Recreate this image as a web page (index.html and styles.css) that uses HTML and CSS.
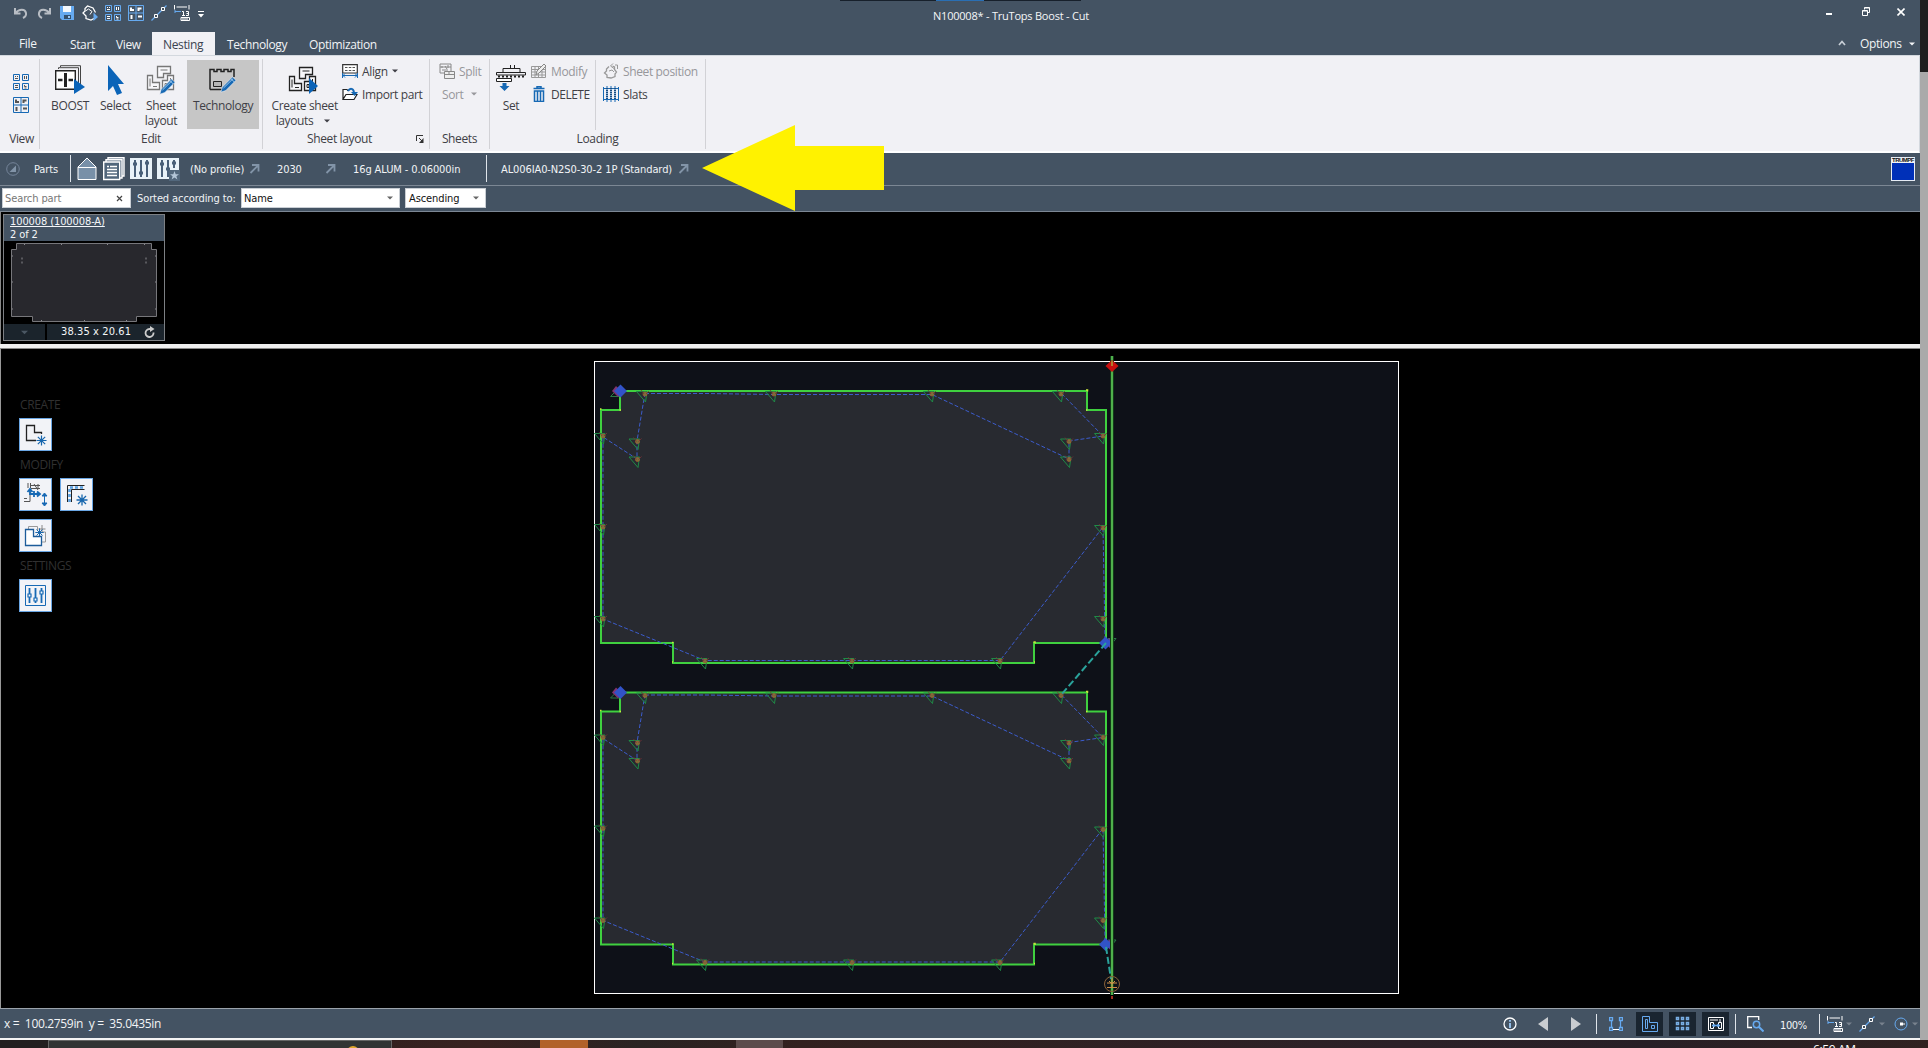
FILE: index.html
```html
<!DOCTYPE html>
<html lang="en">
<head>
<meta charset="utf-8">
<title>N100008* - TruTops Boost - Cut</title>
<link rel="stylesheet" href="styles.css">
</head>
<body>
<svg class="defs" width="0" height="0">
  <defs>
    <symbol id="grid" viewBox="0 0 16 16"><path d="M.5.5h6v6h-6zM9.500.5h6v6h-6zM.5 9.500h6v6h-6zM9.500 9.500h6v6h-6z" fill="none" stroke="currentColor"/><path d="M2 2.500h1M4 2.500h1M2 4.500h3M11.500 2v3M13.500 2v3M2 11.500h3M2 13.500h3M11.500 11v1.500h2M11.500 14h2" stroke="var(--ink)" fill="none"/></symbol>
    <symbol id="panes" viewBox="0 0 16 16"><path d="M.5.5h15v15H.5zM8 .5v15M.5 8h15" fill="none" stroke="currentColor"/><path d="M3 2.500v2.500h3M10.500 6V3.500h3M3.500 10v4M10 11.500h4" stroke="var(--ink)" fill="none" stroke-width="2"/></symbol>
    <symbol id="ruler" viewBox="0 0 16 16"><path d="M.5 0v4.500M15 0v4.500M2.500 2h10.500" stroke="var(--ink)"/><path d="M1 6.500h6M1 5v3" stroke="currentColor"/><path d="M8 6.500h1.500v4M8 10.500h3M12 6.500h2.500v2H12.500M14.500 8v2.500H12M7 12.500h8.500v3H7zM9 13v2M11 13v2M13 13v2" fill="none" stroke="var(--ink)"/></symbol>
    <symbol id="line" viewBox="0 0 16 16"><path d="M.5 15.500L15.500.5" stroke="currentColor" stroke-width="1.200"/><path d="M10.500 2.500h3v3h-3zM3.500 9.500h3v3h-3z" fill="#445363" stroke="#fff"/></symbol>
    <symbol id="down" viewBox="0 0 6 4"><path d="M0 .5h6L3 3.500z" fill="currentColor"/></symbol>
    <symbol id="link" viewBox="0 0 11 11"><path d="M1.500 10L9 2.500M3 2h6.500v6.500" fill="none" stroke="#8294a8" stroke-width="1.800"/></symbol>
    <symbol id="pencil" viewBox="0 0 17 17"><path d="M.8 16.200l1.500-5L12.500 1l3.500 3.300L5.800 14.600z" fill="#1769b4" stroke="#f1f1f5" stroke-width=".6"/><path d="M3.500 12L13 2.700M11 2.700l3.300 3.300" stroke="#9cc8ec" fill="none"/></symbol>
    <symbol id="blocks" viewBox="0 0 30 30"><path d="M11.500 1.500h13v7h-7v4h-6zM1.500 10.500h5v7h7v7h-12zM16.500 15.500h5v-5h6v14h-11z" fill="#f7f7fa" stroke="currentColor" stroke-width="1.300"/><path d="M14.500 5h7M4 13.500v8M7 21.500h4M19 18.500h2v3h-2zM24.500 13v8" fill="none" stroke="currentColor"/></symbol>
    <symbol id="star" viewBox="0 0 12 12"><path d="M6 .5v11M.5 6h11M2 2l8 8M10 2l-8 8" stroke="#1766ad" stroke-width="1.300"/></symbol>
    <g id="mark"><path d="M-8.500-2.500H2L.5 8z" fill="none" stroke="#1f8a46"/><circle cx="0" cy="0" r="2" fill="#7b713b" stroke="#a25d31" stroke-width=".8"/><path d="M-4-4L-1 0M4-3L1 0" stroke="#783135" stroke-width=".8"/></g>
    <g id="lead"><path d="M0-6.500l6.500 6.500-6.500 6.500-6.500-6.500z" fill="#3253c8"/></g>
    <g id="part">
      <path class="sheet-part" d="M620 391H1087V410H1106V643H1034V663H673V643H601V410H620Z"/>
      <path d="M1033.500 642h1.500v1.500M672 642.500h1.500M600 409h1.500M619.500 410h1.500M1086 390h1.500v1.500M1086 410h1.500M1034 662h1M672 662h1" stroke="#c6e63c" stroke-width="1.500" fill="none"/>
      <path class="travel" d="M645 393.500H706L774 394.500H932L1069 459V441L1103 436L1061 393M645 393L637 441V459L603 437V619L705 660.500H1000L1103 527L1105 640"/>
      <use href="#mark" x="645" y="394"/><use href="#mark" x="774" y="394"/><use href="#mark" x="932" y="394"/><use href="#mark" x="1061" y="394"/>
      <use href="#mark" x="603" y="436"/><use href="#mark" x="603" y="527"/><use href="#mark" x="603" y="619"/>
      <use href="#mark" x="637.500" y="441.500"/><use href="#mark" x="637.500" y="459.500"/><use href="#mark" x="1069" y="441.500"/><use href="#mark" x="1069" y="459.500"/>
      <use href="#mark" x="1103" y="436"/><use href="#mark" x="1103" y="528"/><use href="#mark" x="1103" y="619"/>
      <use href="#mark" x="705" y="661"/><use href="#mark" x="852" y="661"/><use href="#mark" x="1000" y="661"/>
      <path d="M610.500 396.500h9M610.500 396.500l6-6M1108 638.500h8l-4 5" fill="none" stroke="#2a7a45"/>
      <path d="M616 386l6 6-4 5-6-6z" fill="#81336f"/><path d="M1109 638l5 5-4 5-4-4z" fill="#6a3c96"/>
      <use href="#lead" x="620.500" y="391"/><use href="#lead" x="1105.500" y="643"/>
    </g>
  </defs>
</svg>

<div class="screen">
<div class="app">
  <header class="titlebar">
    <div class="quick">
      <svg width="14" height="12" viewBox="0 0 14 12"><path d="M1 1v5.500h5.500M1.500 6C5 2 11 1.500 12 6c.4 2-1 4-3 5" fill="none" stroke="#b8bdc4" stroke-width="2"/></svg>
      <svg width="14" height="12" viewBox="0 0 14 12"><path d="M13 1v5.500H7.500M12.500 6C9 2 3 1.500 2 6c-.4 2 1 4 3 5" fill="none" stroke="#b8bdc4" stroke-width="2"/></svg>
      <svg width="14" height="14" viewBox="0 0 14 14"><path d="M0 0h14v14H2l-2-2z" fill="#66aaf0"/><path d="M3 0h8v6H3z" fill="#f4f8fc"/><path d="M4 9h7v4H4z" fill="#34516e"/><path d="M8 10h2v2H8z" fill="#9cc8f4"/></svg>
      <svg width="16" height="16" viewBox="0 0 16 16"><path d="M12 13.500L9 15 4 13.500V11L1 8l2-2V3.500L5.500 1 11 3l2.500 4.500" fill="none" stroke="#fff" stroke-width="1.300"/><path d="M3.500 6l3-2 3.500 2.500-2 3" fill="none" stroke="#fff"/><path d="M11.500 7.500L16 12l-4.500 4z" fill="#66aaf0"/></svg>
      <svg class="onbar" width="16" height="16"><use href="#grid"/></svg>
      <svg class="onbar" width="16" height="16"><use href="#panes"/></svg>
      <svg class="onbar" width="16" height="16"><use href="#line"/></svg>
      <svg class="onbar" width="16" height="16"><use href="#ruler"/></svg>
      <svg width="6" height="7" viewBox="0 0 6 7"><path d="M0 .5h6" stroke="#fff"/><path d="M0 3h6L3 6.500z" fill="#fff"/></svg>
    </div>
    <div class="caption"><div class="notch"><i></i></div><h1>N100008* - TruTops Boost - Cut</h1></div>
    <div class="winbtns">
      <svg width="6" height="10" viewBox="0 0 6 10"><path d="M0 9h6" stroke="#fff" stroke-width="2"/></svg>
      <svg width="8" height="9" viewBox="0 0 8 9"><path d="M2.500 2.500v-2h5v5h-2M.5 3.500h5v5h-5zM.5 4h5M2.500 1h5" fill="none" stroke="#fff"/></svg>
      <svg width="8" height="8" viewBox="0 0 8 8"><path d="M.5.5l7 7M7.500.5l-7 7" stroke="#fff" stroke-width="1.600"/></svg>
    </div>
  </header>

  <nav class="tabs">
    <a class="tab t-file">File</a><a class="tab t-start">Start</a><a class="tab t-view">View</a><a class="tab active">Nesting</a><a class="tab t-tech">Technology</a><a class="tab t-opt">Optimization</a>
    <span class="spacer"></span>
    <svg class="collapse" width="8" height="6" viewBox="0 0 8 6"><path d="M1 5l3-3.500L7 5" fill="none" stroke="#c7ced6" stroke-width="1.700"/></svg>
    <span class="options">Options</span>
    <svg class="opt-arrow" width="6" height="4"><use href="#down"/></svg>
  </nav>

  <section class="ribbon">
    <div class="group g-view">
      <div class="body stack">
        <svg width="16" height="16"><use href="#grid"/></svg>
        <svg width="16" height="16"><use href="#panes"/></svg>
      </div>
      <div class="name">View</div>
    </div>
    <div class="group g-edit">
      <div class="body">
        <button class="big b-boost"><svg width="30" height="30" viewBox="0 0 30 30"><path d="M5.500 2V.7h20V20M3.500 4V2.700h20V21" fill="none" stroke="#444"/><path d="M.7 5.700h19.600v18.600H.7z" fill="#fff" stroke="#222" stroke-width="1.400"/><path d="M10.500 8v14" stroke="#222" stroke-width="3"/><path d="M3 15h4.500M13.500 15H18" stroke="#222" stroke-width="2.400"/><path d="M19 14l11 8-11 7z" fill="#0b64b8"/></svg><span>BOOST</span></button>
        <button class="big b-select"><svg width="30" height="30" viewBox="0 0 30 30"><path d="M7 0v26l5-5 4 9 5-2-4-9h6z" fill="#0b64b8"/></svg><span>Select</span></button>
        <button class="big b-layout"><svg width="30" height="30" viewBox="0 0 30 30"><use href="#blocks" width="30" height="30"/><use href="#pencil" x="13" y="13" width="17" height="17"/></svg><span>Sheet<br>layout</span></button>
        <button class="big b-tech"><svg width="30" height="30" viewBox="0 0 30 30"><path d="M2 24.500V4.500h4v2h3v-2h4v2h3v-2h4v2h3v-2h3V12M2 24.500h12" fill="none" stroke="#222" stroke-width="1.500"/><path d="M5.500 16.500h8v5h-8z" fill="#b5b5b5" stroke="#222"/><use href="#pencil" x="12" y="11" width="17" height="17"/></svg><span>Technology</span></button>
      </div>
      <div class="name">Edit</div>
    </div>
    <div class="group g-sheet">
      <div class="body">
        <button class="big b-create"><svg width="30" height="30" viewBox="0 0 30 30"><use href="#blocks" y="1" width="30" height="30"/><path d="M21 13l9 8-9 8z" fill="#0b64b8"/></svg><span>Create sheet<br>layouts<svg class="inl" width="6" height="4"><use href="#down"/></svg></span></button>
        <div class="smalls">
          <button class="small w-align"><svg width="16" height="16" viewBox="0 0 16 16"><path d="M.7 10V1.700h14.600V10z" fill="#fff" stroke="#333" stroke-width="1.200"/><path d="M3 4.500h2.500M6.800 4.500h2.500M10.500 4.500H13M3 7.500h2.500M6.800 7.500h2.500M10.500 7.500H13" stroke="#555"/><path d="M1 12.500h14M3 10.500l-2 2 2 2M13 10.500l2 2-2 2M.5 10v5M15.500 10v5" fill="none" stroke="#1769b4"/></svg><span>Align</span><svg width="6" height="4"><use href="#down"/></svg></button>
          <button class="small w-import"><svg width="16" height="16" viewBox="0 0 16 16"><path d="M1 13.500V3.500h4l1 1.500M1 13.500l3-5h11l-3 5zM13 8V6" fill="#fff" stroke="#222" stroke-width="1.200"/><path d="M6 5c2-3 5-3 6 1" fill="none" stroke="#1769b4" stroke-width="2"/><path d="M9 6h7l-3.500 4z" fill="#1769b4"/></svg><span>Import part</span></button>
        </div>
      </div>
      <div class="name">Sheet layout</div>
      <svg class="launcher" width="8" height="8" viewBox="0 0 8 8"><path d="M.5 6V.5H7M3 3l3 3" fill="none" stroke="#333"/><path d="M7.500 3v5H3z" fill="#333"/></svg>
    </div>
    <div class="group g-sheets">
      <div class="body">
        <div class="smalls off">
          <button class="small w-split"><svg width="16" height="16" viewBox="0 0 16 16"><path d="M1 1h11v9H1zM3 3v2M6 3l2 3M3 7h6M9 2v3M1 4h11" fill="none" stroke="#888"/><path d="M5.500 8.500h10v7h-10zM5.500 11.500h10M10 8.500v3" fill="#eee" stroke="#888"/></svg><span>Split</span></button>
          <button class="small w-sort"><span>Sort</span><svg width="6" height="4"><use href="#down"/></svg></button>
        </div>
      </div>
      <div class="name">Sheets</div>
    </div>
    <div class="group g-load">
      <div class="body">
        <button class="big b-set"><svg width="30" height="30" viewBox="0 0 30 30"><path d="M14.500 0v4M18.500 0v4M7 3.500h17v4H7zM.5 7.500h29v2.500H.5z" fill="none" stroke="#222"/><path d="M2 11.500h28" stroke="#222" stroke-width="2" stroke-dasharray="2 2"/><path d="M.5 13.500h15v3H.5z" fill="#fff" stroke="#222"/><path d="M6.500 18h4v3h3l-5 5-5-5h3z" fill="#1769b4"/></svg><span>Set</span></button>
        <div class="smalls s-load">
          <button class="small off"><svg width="16" height="16" viewBox="0 0 16 16"><path d="M.5 3.500h14v11H.5zM.5 6.500h14M.5 9h14M.5 12h14M4 4v10M7.500 4v10M11 4v10" fill="none" stroke="#999"/><path d="M5 12l1-4 7-7 2 2-7 7z" fill="#eee" stroke="#888"/></svg><span>Modify</span></button>
          <button class="small"><svg width="16" height="16" viewBox="0 0 16 16"><path d="M2.500 2.500h11M6 2V.7h4V2M3.500 5h9v10.500h-9zM6.500 5v10M9.500 5v10" fill="none" stroke="#1769b4" stroke-width="1.500"/></svg><span class="del">DELETE</span></button>
        </div>
        <div class="smalls s-pos">
          <button class="small off"><svg width="16" height="16" viewBox="0 0 16 16"><path d="M6 3.500L3.500 6v2L1.500 10l2.500 2v2.500l4 .5 4-1.500V11l1.500-2-2-2.500V4l-2-1" fill="none" stroke="#999" stroke-width="1.300"/><path d="M10 .5L7.500 3 11 5.500M12 2h2.500v4M6 8l3-1 2 2" fill="none" stroke="#999"/></svg><span>Sheet position</span></button>
          <button class="small"><svg width="16" height="16" viewBox="0 0 16 16"><path d="M.5 2.500h15M.5 13.500h15M.5 1v14M15.500 1v14M4 0v16M8 0v16M12 0v16" stroke="#1769b4" fill="none"/><path d="M4 2v12M8 2v12M12 2v12" stroke="#1c4d80" stroke-width="2" stroke-dasharray="1 1"/></svg><span>Slats</span></button>
        </div>
      </div>
      <div class="name">Loading</div>
    </div>
  </section>

  <section class="jobbar">
    <svg class="j-tri" width="14" height="14" viewBox="0 0 14 14"><circle cx="7" cy="7" r="6.300" fill="none" stroke="#75859a"/><path d="M10 3.500V10H3.500z" fill="#8294a8"/></svg>
    <span class="j-parts">Parts</span>
    <i class="bar"></i>
    <svg class="j-home" width="20" height="24" viewBox="0 0 20 24"><path d="M1 10L10 1l9 9v12.500H1z" fill="#7890a8" stroke="#fff"/><path d="M1 10.500h18" stroke="#fff"/></svg>
    <svg class="j-i" width="22" height="24" viewBox="0 0 22 24"><path d="M5 3V.7h16V19h-2M3 5V2.700h16V21h-2M.7 5h16v17.500H.7z" fill="#52677c" stroke="#fff" stroke-width="1.400"/><path d="M4 9.500h2M7 9.500h7M4 12.500h10M4 15.500h10M4 18.500h10" stroke="#fff" stroke-width="1.500"/></svg>
    <svg class="j-i" width="22" height="24" viewBox="0 0 22 24"><path d="M0 1h22v21H0z" fill="#e8f2f8"/><path d="M5 3v17M11 3v17M17 3v17" stroke="#496079" stroke-width="2"/><path d="M3 7h4M9 16h4M15 6h4" stroke="#496079" stroke-width="3"/></svg>
    <svg class="j-i" width="23" height="24" viewBox="0 0 23 24"><path d="M0 1h22v21H0z" fill="#e8f2f8"/><path d="M5 3v17M11 3v17M17 3v8" stroke="#496079" stroke-width="2"/><path d="M3 7h4M9 12h4M15 6h4" stroke="#496079" stroke-width="3"/><path d="M12 13h11v11H12z" fill="#52677c"/><path d="M17.500 14l1.200 3.200H22l-2.600 2 1 3.300-2.900-2-2.900 2 1-3.300-2.600-2h3.300z" fill="#b4c6d8"/></svg>
    <span class="j-prof">(No profile)</span><svg class="j-l1" width="11" height="11"><use href="#link"/></svg>
    <span class="j-num">2030</span><svg class="j-l2" width="11" height="11"><use href="#link"/></svg>
    <span class="j-mat">16g ALUM - 0.06000in</span>
    <i class="bar"></i>
    <span class="j-sheet">AL006IA0-N2S0-30-2 1P (Standard)</span><svg class="j-l3" width="11" height="11"><use href="#link"/></svg>
    <span class="spacer"></span>
    <div class="logo"><b>TRUMPF</b></div>
    <svg class="pointer" width="184" height="88" viewBox="0 0 184 88"><path d="M1 44L94 1V22H183V66H94V87Z" fill="#fff200"/></svg>
  </section>

  <section class="sortbar">
    <div class="field f-search"><span>Search part</span><svg width="7" height="7" viewBox="0 0 7 7"><path d="M1 1l5 5M6 1L1 6" stroke="#444" stroke-width="1.200"/></svg></div>
    <span class="s-label">Sorted according to:</span>
    <div class="field f-name"><span>Name</span><svg width="6" height="4"><use href="#down"/></svg></div>
    <div class="field f-asc"><span>Ascending</span><svg width="6" height="4"><use href="#down"/></svg></div>
  </section>

  <section class="parts">
    <article class="card">
      <div class="card-head"><u>100008 (100008-A)</u><span>2 of 2</span></div>
      <svg class="thumb" width="160" height="83" viewBox="4 241 160 83"><path d="M16.500 243.500H151.500V249.500H156.500V316.500H136.500V321.500H32.500V316.500H11.500V249.500H16.500Z" fill="#28282d" stroke="#77777b"/><path d="M22 257.500v2M22 261.500v2M146 257.500v2M146 261.500v2M12 256h1M12 282h1M12 309h1M155 256h1M155 282h1M155 309h1M24 244.500h1M61 244.500h1M107 244.500h1M144 244.500h1M41 320.500h1M84 320.500h1M126 320.500h1" stroke="#8a8a90"/></svg>
      <div class="card-foot"><div class="cf-a"><svg width="7" height="5"><use href="#down"/></svg></div><div class="cf-b"><span>38.35 x 20.61</span><svg width="11" height="12" viewBox="0 0 11 12"><path d="M9.500 6.500A4 4 0 1 1 5.500 3H8" fill="none" stroke="#ccc" stroke-width="1.800"/><path d="M6 0l4.500 3L6 6z" fill="#ccc"/></svg></div></div>
    </article>
  </section>
  <div class="splitter"></div>

  <main class="stage">
    <aside class="tools">
      <h2>CREATE</h2>
      <div class="row"><button class="tool"><svg width="27" height="27" viewBox="0 0 27 27"><path d="M14 19.500H4.500v-15h8v7h7V13" fill="none" stroke="#222" stroke-width="1.300"/><use href="#star" x="14" y="14" width="11" height="11"/></svg></button></div>
      <h2>MODIFY</h2>
      <div class="row">
        <button class="tool"><svg width="27" height="27" viewBox="0 0 27 27"><path d="M2 20.500h6v-10M2 17.500h3M6 2v5M8.500 2v5M9 4.500h9M9 7.500h9M12 3l4 6M16 3v5" fill="none" stroke="#555"/><path d="M8 8v5h10M5.500 11L8 8l2.500 3M15 10.500l3 2.500-3 2.500M12 10v6" fill="none" stroke="#1769b4" stroke-width="1.800"/><path d="M22.500 13v11M20 15l2.500-3 2.500 3zM20 22l2.500 3 2.500-3z" fill="#1769b4" stroke="#1769b4"/></svg></button>
        <button class="tool"><svg width="27" height="27" viewBox="0 0 27 27"><path d="M4.500 21V4.500h17M8.500 21V8.500h13" fill="none" stroke="#222"/><path d="M6.500 21V6.500h15" fill="none" stroke="#5aa0e0" stroke-width="2.600" stroke-dasharray="3 2"/><use href="#star" x="13" y="13" width="12" height="12"/></svg></button>
      </div>
      <div class="row"><button class="tool"><svg width="27" height="27" viewBox="0 0 27 27"><path d="M6.500 7V4.500h9V8M20 10h3.500v10H20" fill="none" stroke="#999"/><path d="M3.500 7.500h8v7h8v9h-16z" fill="#fff" stroke="#1c5c9a" stroke-width="1.300"/><path d="M20 3v8M16.500 7h7" stroke="#888"/><use href="#star" x="13" y="6" width="9" height="9"/></svg></button></div>
      <h2>SETTINGS</h2>
      <div class="row"><button class="tool"><svg width="27" height="27" viewBox="0 0 27 27"><path d="M3.500 3.500h20v20h-20z" fill="none" stroke="#1769b4"/><path d="M7.500 6v15M13.500 6v15M19.500 6v15" fill="none" stroke="#1769b4" stroke-width="1.800"/><path d="M6 12h3v3H6zM12 16h3v3h-3zM18 9h3v3h-3z" fill="#f4faff" stroke="#1769b4" stroke-width="1.200"/></svg></button></div>
    </aside>
    <svg class="sheet" width="830" height="659" viewBox="590 349 830 659">
      <rect x="594.500" y="361.500" width="804" height="632" fill="#0e1118" stroke="#fff"/>
      <use href="#part"/>
      <use href="#part" y="301.500"/>
      <path d="M1112 356V995" stroke="#123a18" stroke-width="4"/>
      <path d="M1112 356V995" stroke="#4fb04b" stroke-width="2"/>
      <path d="M1112 996v3" stroke="#a03020" stroke-width="2"/>
      <path d="M1106 643L1061 695M1106 947L1111 979" stroke="#2aa39b" stroke-width="2" stroke-dasharray="7 3" fill="none"/>
      <path d="M1112 360l6.500 6-6.500 6-6.500-6z" fill="#c80f0f"/><path d="M1112 361v5" stroke="#b08030" stroke-width="2"/>
      <circle cx="1112" cy="984" r="7.500" fill="none" stroke="#8c6238"/><path d="M1107 983h10M1107 987.500h10M1112 978v9M1109 981l3 3 3-3" stroke="#d09048" fill="none"/>
    </svg>
  </main>

  <footer class="status">
    <span class="coords">x =&nbsp; 100.2759in&nbsp; y =&nbsp; 35.0435in</span>
    <span class="spacer"></span>
    <div class="tray onbar">
      <svg class="y-info" width="14" height="14" viewBox="0 0 14 14"><circle cx="7" cy="7" r="6" fill="none" stroke="#fff" stroke-width="1.300"/><path d="M7 3v1.700M7 6v5" stroke="#9cc8f4" stroke-width="1.800"/></svg>
      <svg class="y-prev" width="10" height="14" viewBox="0 0 10 14"><path d="M10 0v14L0 7z" fill="#c9ccd0"/></svg>
      <svg class="y-next" width="10" height="14" viewBox="0 0 10 14"><path d="M0 0v14l10-7z" fill="#c9ccd0"/></svg>
      <i class="bar"></i>
      <svg class="y-net" width="14" height="14" viewBox="0 0 14 14"><path d="M.5.5h3v3h-3zM10.500.5h3v3h-3zM.5 10.500h3v3h-3zM10.500 10.500h3v3h-3zM2.500 4v6M11.500 4v6" fill="none" stroke="#66aaf0" stroke-width="1.300"/><path d="M4 12.500h6" stroke="#fff"/></svg>
      <div class="tog"><svg width="16" height="16" viewBox="0 0 16 16"><path d="M.5.5h7v6h8v9H.5zM3.500 3.500v9h2v-9zM9.500 9.500h3v3h-3z" fill="none" stroke="#66aaf0"/></svg></div>
      <div class="tog"><svg width="16" height="16" viewBox="0 0 16 16"><path d="M1.500 1.500h2v2h-2zM6.500 1.500h2v2h-2zM11.500 1.500h2v2h-2zM1.500 6.500h2v2h-2zM6.500 6.500h2v2h-2zM11.500 6.500h2v2h-2zM1.500 11.500h2v2h-2zM6.500 11.500h2v2h-2zM11.500 11.500h2v2h-2z" fill="none" stroke="#78aee4" stroke-width="1.500"/></svg></div>
      <div class="tog"><svg width="16" height="16" viewBox="0 0 16 16"><path d="M.5 1.500h15v13H.5zM2.500 12.500v-6h3v6zM10.500 12.500v-6h3v6zM2 4h8M12 3v3" fill="none" stroke="#fff"/><path d="M4 9.500h8M6 8v3M10 8v3" stroke="#66aaf0" stroke-width="1.500"/></svg></div>
      <i class="bar"></i>
      <svg class="y-zoom" width="17" height="16" viewBox="0 0 17 16"><path d="M5 11.500H.7V.7h11V4" fill="none" stroke="#fff" stroke-width="1.300"/><circle cx="9.500" cy="8.500" r="3.200" fill="none" stroke="#66aaf0" stroke-width="1.500"/><path d="M12 11l4.500 4.500" stroke="#66aaf0" stroke-width="2"/></svg>
      <span class="pct">100%</span>
      <i class="bar"></i>
      <svg class="y-r" width="16" height="16"><use href="#ruler"/></svg><svg class="y-d" width="6" height="4"><use href="#down"/></svg>
      <svg class="y-l" width="16" height="16"><use href="#line"/></svg><svg class="y-d" width="6" height="4"><use href="#down"/></svg>
      <svg class="y-c" width="14" height="14" viewBox="0 0 14 14"><circle cx="7" cy="7" r="6" fill="none" stroke="#66aaf0"/><path d="M6 5.500h3v3H6z" fill="#fff"/><path d="M9 7h2" stroke="#fff"/></svg><svg class="y-d" width="6" height="4"><use href="#down"/></svg>
    </div>
  </footer>
</div>
<div class="edge"><i></i></div>
<div class="taskbar"><div class="tb-search"><i></i></div><i class="tb-orange"></i><i class="tb-gray"></i><span class="clock">6:59 AM</span></div>
</div>
</body>
</html>
```
FILE: styles.css
```css
* { box-sizing: border-box; }
body { margin: 0; background: #000; overflow: hidden; }
svg { display: block; flex: none; }
.defs { position: absolute; }
button { border: 0; background: none; padding: 0; font: inherit; color: inherit; letter-spacing: inherit; }
h1, h2 { margin: 0; font-weight: 400; }
.spacer { flex: 1; }
.screen {
  width: 1928px; height: 1048px; overflow: hidden;
  display: grid; grid-template: 1040px 8px / 1920px 8px;
  font: 12px/15px "Open Sans", "Noto Sans", sans-serif; letter-spacing: -.37px;
  --ink: #555; white-space: nowrap;
}
.app { display: flex; flex-direction: column; min-width: 0; border-bottom: 2px solid #f4f4f4; }
.onbar { color: #66aaf0; --ink: #fff; }

/* title bar */
.titlebar { height: 32px; background: #445363; display: grid; grid-template-columns: 840px 241px 1fr; }
.quick { display: flex; align-items: center; padding: 0 0 6px 14px; gap: 7px; }
.quick svg:nth-child(2) { margin-left: 2px; margin-right: 2px; }
.quick svg:nth-child(4) { margin-left: 1px; }
.quick svg:nth-child(9) { margin: 3px 0 0 1px; }
.caption { display: flex; flex-direction: column; }
.notch { height: 1px; background: #17202b; padding-left: 96px; }
.notch i { display: block; width: 48px; height: 1px; background: #2a6fb4; }
.caption h1 { font: 11px/15px "Open Sans", sans-serif; letter-spacing: -.22px; color: #f4f6f8; margin: 7px 0 0 93px; }
.winbtns { display: flex; justify-content: flex-end; padding: 7px 15px 0 0; }
.winbtns svg:nth-child(1) { margin-top: -2px; margin-right: 30px; }
.winbtns svg:nth-child(2) { margin-right: 27px; }
.winbtns svg:nth-child(3) { margin-top: 1px; }

/* tabs */
.tabs { height: 23px; background: #445363; color: #f2f4f6; display: flex; padding-left: 19px; }
.tab { padding-top: 5px; }
.t-file { width: 51px; padding-top: 4px; }
.t-start { width: 46px; }
.t-view { width: 36px; }
.active { width: 63px; background: #f1f1f5; color: #3a4350; padding-left: 11px; margin-right: 12px; }
.t-tech { width: 82px; }
.collapse { margin: 8px 14px 0 0; }
.options { width: 49px; padding-top: 4px; }
.opt-arrow { margin: 10px 5px 0 0; }

/* ribbon */
.ribbon { height: 98px; background: #f1f1f5; color: #3f3f46; display: flex; padding-top: 3px; border: 1px solid #d3d8de; border-left: 0; box-shadow: inset 0 -1px #fff; border-bottom-color: #fff; }
.group { height: 90px; border-right: 1px solid #d2d2d6; display: grid; grid-template-rows: 72px 17px; }
.body { display: flex; padding-top: 1px; }
.name { text-align: center; }
.g-view { width: 40px; } .g-edit { width: 223px; } .g-sheet { width: 167px; } .g-sheets { width: 60px; } .g-load { width: 216px; }
.g-view .name { padding-left: 4px; }
.g-sheet { grid-template-columns: 153px 13px; }
.g-sheet .body { grid-column: 1 / 3; }
.launcher { margin-top: 4px; }
.stack { flex-direction: column; gap: 7px; padding: 15px 0 0 13px; color: #1769b4; }
.big { display: flex; flex-direction: column; align-items: center; height: 69px; padding-top: 5px; text-align: center; }
.big svg { margin-bottom: 3px; }
.big .inl { display: inline-block; margin: 0 0 2px 11px; }
.b-boost { margin-left: 6px; width: 48px; }
.b-select { width: 43px; }
.b-layout { width: 50px; padding-right: 2px; }
.b-layout svg { color: #777; }
.b-tech { width: 72px; background: #c6c6c6; }
.b-create { width: 79px; margin-left: 0; color: #3f3f46; }
.b-create > svg { color: #222; }
.b-create span { width: 64px; white-space: nowrap; padding-left: 1px; }
.smalls { display: flex; flex-direction: column; gap: 7px; padding-top: 3px; }
.small { display: flex; align-items: center; gap: 4px; height: 16px; }
.off { color: #97979b; }
.w-sort { padding-left: 3px; gap: 7px; }
.g-sheets .smalls { padding-left: 9px; }
.b-set { width: 34px; margin-left: 4px; margin-right: 1px; }
.s-load { width: 67px; padding-left: 2px; border-right: 1px solid #d2d2d6; height: 70px; }
.s-pos { padding-left: 7px; }
.del { letter-spacing: -.5px; }

/* job bar */
.jobbar, .sortbar, .card, .pct { font-family: "DejaVu Sans Condensed", "DejaVu Sans", sans-serif; font-stretch: condensed; font-size: 11px; letter-spacing: -.1px; }
.jobbar { height: 33px; background: #445363; border-bottom: 1px solid #7c8794; color: #f2f4f6; display: flex; align-items: center; padding: 0 5px 1px 6px; position: relative; }
.jobbar > * { flex: none; }
.jobbar > .spacer { flex: 1; }
.jobbar > span { padding-top: 2px; }
.bar { width: 1px; height: 27px; background: #dfe4ea; flex: none; }
.j-tri { margin-right: 14px; }
.j-parts { width: 36px; }
.j-home { margin: 0 6px; }
.j-i { margin-right: 5px; }
.j-prof { width: 59px; margin-left: 5px; }
.j-num { width: 48px; margin-left: 17px; }
.j-l2 { margin-right: 17px; }
.j-mat { width: 133px; }
.j-sheet { width: 177px; margin-left: 14px; }
.logo { width: 24px; height: 24px; background: #0030b8; border: 1px solid #e6ecf4; }
.logo b { display: block; height: 5px; background: #f2f4f6; color: #111; font: bold 6px/5px "Liberation Sans", sans-serif; letter-spacing: -.5px; }
.pointer { position: absolute; left: 701px; top: -29px; z-index: 2; }

/* sort bar */
.sortbar { height: 26px; background: #445363; border-bottom: 1px solid #7c8794; color: #f2f4f6; display: flex; align-items: center; padding: 0 0 1px 2px; }
.field { height: 20px; background: #fff; border: 1px solid #c9ced4; color: #111; display: flex; align-items: center; justify-content: space-between; padding: 0 6px 0 2px; }
.field svg { color: #666; }
.f-search { width: 129px; padding-right: 7px; }
.f-search span { color: #777; }
.s-label { width: 104px; margin-left: 6px; }
.f-name { width: 159px; margin-right: 5px; }
.f-asc { width: 81px; padding-left: 3px; }

/* part list */
.parts { height: 132px; background: #000; border-left: 1px solid #888; padding: 2px 0 0 2px; }
.card { width: 162px; height: 127px; border: 1px solid #7d8084; color: #f4f6f8; display: flex; flex-direction: column; }
.card-head { height: 26px; background: #445363; line-height: 13px; padding: 0 0 0 6px; display: flex; flex-direction: column; }
.card-foot { display: flex; gap: 2px; height: 16px; }
.cf-a { width: 41px; background: #1b242c; color: #4b5763; display: grid; place-items: center; }
.cf-b { flex: 1; background: #1b242c; display: flex; align-items: center; padding: 0 0 1px 14px; }
.cf-b span { width: 83px; letter-spacing: .1px; }
.splitter { height: 5px; background: #f0f0f0; border-bottom: 1px solid #8a8a8a; }

/* drawing area */
.stage { height: 659px; background: #000; border-left: 1px solid #999; display: flex; }
.tools { width: 589px; padding: 48px 0 0 18px; }
.tools h2 { font-size: 12px; line-height: 15px; color: #303030; padding-left: 1px; height: 21px; }
.row { display: flex; gap: 8px; margin-bottom: 8px; }
.row:has(+ h2) { margin-bottom: 6px; }
.tool { width: 33px; height: 33px; background: #f2f3f7; border: 1px solid #6aa6e4; display: grid; place-items: center; }
.sheet-part { fill: #282a30; stroke: #3fd03f; stroke-width: 2; }
.travel { fill: none; stroke: #3c5ccc; stroke-dasharray: 4 2; }

/* status bar */
.status { height: 30px; background: #445363; border-top: 1px solid #9aa2ab; color: #f2f4f6; display: flex; align-items: center; }
.coords { padding-left: 4px; letter-spacing: -.33px; }
.tray { display: flex; align-items: center; width: 417px; padding-top: 1px; }
.tray > * { flex: none; }
.tray .bar { height: 20px; }
.tray .pct { color: #f2f4f6; width: 39px; letter-spacing: -.4px; padding-top: 2px; }
.y-info { margin-right: 21px; }
.y-prev { margin-right: 23px; }
.y-next { margin-right: 15px; }
.y-net { margin: 0 13px 0 12px; }
.tog { width: 27px; height: 24px; background: #1a2530; display: grid; place-items: center; margin-right: 6px; }
.y-zoom { margin: 0 16px 0 11px; }
.y-r { margin: 0 3px 0 7px; }
.y-l { margin: 0 4px 0 7px; }
.y-c { margin: 0 4px 0 9px; }
.y-d { color: #78828e; }

/* right edge and taskbar */
.edge { background: #aaa; }
.edge i { display: block; height: 72px; background: #1f1f1f; }
.taskbar { grid-column: 1 / 3; height: 8px; overflow: hidden; display: flex; background: linear-gradient(90deg, #231f20 0 48px, #38211f 480px, #2a2322 640px, #33211f 800px, #2c2027 1400px, #281f26 1650px, #302120); }
.tb-search { width: 344px; margin-left: 48px; background: #323434; border: 1px solid #666; border-bottom: 0; padding: 5px 0 0 298px; }
.tb-search i { display: block; width: 12px; height: 12px; border-radius: 50%; background: #e0a82c; }
.tb-orange { width: 48px; margin-left: 148px; background: #b2622b; }
.tb-gray { width: 47px; margin-left: 148px; background: #5c4c4c; }
.clock { margin: 2px 0 0 1030px; color: #fff; }
```
